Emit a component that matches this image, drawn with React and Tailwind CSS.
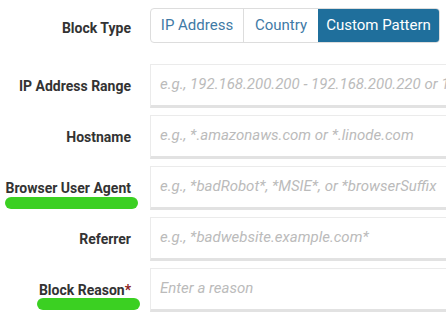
import React from "react";

function Label({ children, bar, barClass }) {
  return (
    <div className="relative w-[131px] shrink-0 text-right text-[14px] font-bold text-[#333333] leading-none">
      {children}
      {bar && <div className={"absolute rounded-full bg-[#3bd022] " + barClass} />}
    </div>
  );
}

function Field({ placeholder }) {
  return (
    <div className="ml-[19px] flex h-[44px] w-[400px] shrink-0 items-center border border-[#ebebeb] border-b-[3px] border-b-[#e2e2e2] bg-white pl-[9px] pb-[1px]">
      <span className="whitespace-nowrap text-[15px] italic text-[#bbbbbb]">{placeholder}</span>
    </div>
  );
}

export default function App() {
  const rows = [
    { label: "IP Address Range", ph: "e.g., 192.168.200.200 - 192.168.200.220 or 192.168.200.0/24" },
    { label: "Hostname", ph: "e.g., *.amazonaws.com or *.linode.com" },
    { label: "Browser User Agent", ph: "e.g., *badRobot*, *MSIE*, or *browserSuffix", bar: "left-[5px] right-[-7px] top-[16px] h-[12px]" },
    { label: "Referrer", ph: "e.g., *badwebsite.example.com*" },
    { label: "Block Reason", req: true, ph: "Enter a reason", bar: "left-[37px] right-[-9px] top-[15px] h-[12px]" },
  ];
  return (
    <div className="h-[319px] w-[446px] overflow-hidden bg-white pt-[8px]" style={{ fontFamily: "Roboto, 'Liberation Sans', sans-serif" }}>
      <div className="flex h-[35px] items-center">
        <div className="relative top-[2px]">
          <Label>Block Type</Label>
        </div>
        <div className="ml-[19px] flex h-[35px] shrink-0 overflow-hidden rounded-[4px] border border-[#dddddd] text-[15px]">
          <div className="flex w-[93px] items-center justify-center border-r border-[#dddddd] text-[#3f7aa6]">IP Address</div>
          <div className="flex w-[74px] items-center justify-center text-[#3f7aa6]">Country</div>
          <div className="flex w-[121px] items-center justify-center bg-[#1f6f9c] text-white">Custom Pattern</div>
        </div>
      </div>
      <div className="mt-[21px] flex flex-col gap-[7px]">
        {rows.map((r) => (
          <div key={r.label} className="flex items-center">
            <Label bar={!!r.bar} barClass={r.bar}>
              {r.label}
              {r.req && <span className="text-[#8a2020]">*</span>}
            </Label>
            <Field placeholder={r.ph} />
          </div>
        ))}
      </div>
    </div>
  );
}
